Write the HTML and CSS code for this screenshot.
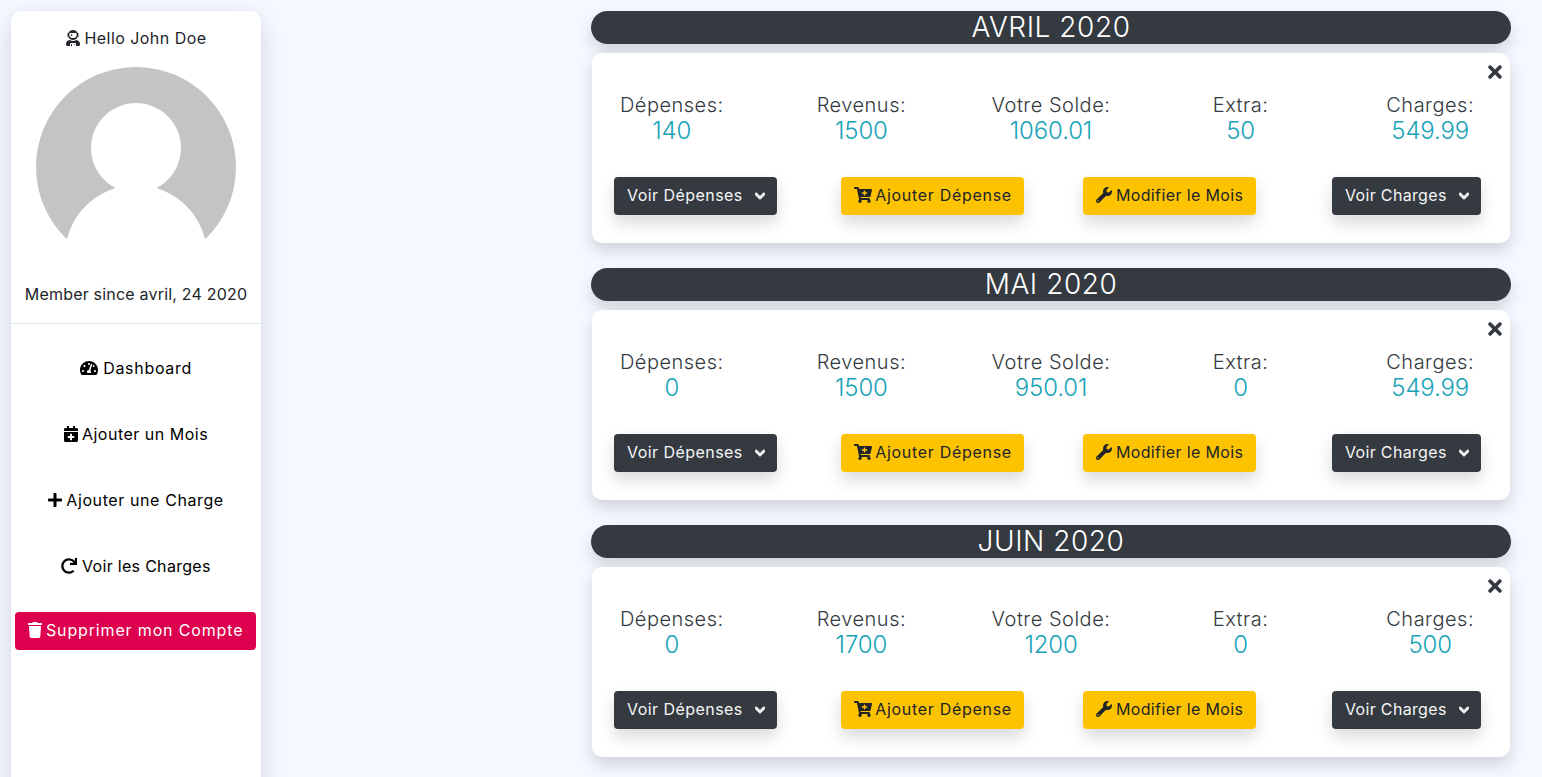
FILE: index.html
```html
<!DOCTYPE html>
<html lang="fr">
<head>
<meta charset="utf-8">
<title>Budget</title>
<link rel="stylesheet" href="styles.css">
</head>
<body>
<svg class="sprite" aria-hidden="true">
  <symbol id="i-astronaut" viewBox="0 0 448 512"><path d="M64 224h13.5c24.7 56.5 80.9 96 146.5 96s121.8-39.5 146.5-96H384c8.8 0 16-7.2 16-16v-96c0-8.8-7.2-16-16-16h-13.5C345.8 39.5 289.6 0 224 0S102.2 39.5 77.5 96H64c-8.8 0-16 7.2-16 16v96c0 8.8 7.2 16 16 16zm40-88c0-22 21.5-40 48-40h144c26.5 0 48 18 48 40v24c0 53-43 96-96 96h-48c-53 0-96-43-96-96v-24zm72 72l12-36 36-12-36-12-12-36-12 36-36 12 36 12 12 36zm151.6 113.4C297.7 340.7 262.2 352 224 352s-73.7-11.3-103.6-30.6C52.9 328.5 0 385 0 454.4v9.6c0 26.5 21.5 48 48 48h80v-64c0-17.7 14.3-32 32-32h128c17.7 0 32 14.3 32 32v64h80c26.5 0 48-21.5 48-48v-9.6c0-69.4-52.9-125.9-120.4-133zM272 448c-8.8 0-16 7.2-16 16s7.2 16 16 16 16-7.2 16-16-7.2-16-16-16zm-96 0c-8.8 0-16 7.2-16 16v48h32v-48c0-8.8-7.2-16-16-16z"/></symbol>
  <symbol id="i-gauge" viewBox="0 0 576 512"><path d="M288 32C128.94 32 0 160.94 0 320c0 52.8 14.25 102.26 39.06 144.8 5.61 9.62 16.3 15.2 27.44 15.2h443c11.14 0 21.83-5.58 27.44-15.2C561.75 422.26 576 372.8 576 320c0-159.06-128.94-288-288-288zm0 64c14.71 0 26.58 10.13 30.32 23.65-1.11 2.26-2.64 4.23-3.45 6.67l-9.22 27.67c-5.13 3.49-10.97 6.01-17.64 6.01-17.67 0-32-14.33-32-32S270.33 96 288 96zM96 384c-17.67 0-32-14.33-32-32s14.33-32 32-32 32 14.33 32 32-14.33 32-32 32zm48-160c-17.67 0-32-14.33-32-32s14.33-32 32-32 32 14.33 32 32-14.33 32-32 32zm246.77-72.41l-61.33 184C343.13 347.33 352 364.54 352 384c0 11.72-3.38 22.55-8.88 32H232.88c-5.5-9.45-8.88-20.28-8.88-32 0-33.94 26.5-61.43 59.9-63.59l61.34-184.01c4.17-12.56 17.73-19.45 30.36-15.17 12.57 4.19 19.35 17.79 15.17 30.36zm14.66 57.2l15.52-46.55c3.47-1.29 7.13-2.23 11.05-2.23 17.67 0 32 14.33 32 32s-14.33 32-32 32c-11.38-.01-20.89-6.28-26.57-15.22zM480 384c-17.67 0-32-14.33-32-32s14.33-32 32-32 32 14.33 32 32-14.33 32-32 32z"/></symbol>
  <symbol id="i-calendar" viewBox="0 0 448 512"><path d="M436 160H12c-6.6 0-12-5.4-12-12v-36c0-26.5 21.5-48 48-48h48V12c0-6.6 5.4-12 12-12h40c6.6 0 12 5.4 12 12v52h128V12c0-6.6 5.4-12 12-12h40c6.6 0 12 5.4 12 12v52h48c26.5 0 48 21.5 48 48v36c0 6.6-5.4 12-12 12zM12 192h424c6.6 0 12 5.4 12 12v260c0 26.5-21.5 48-48 48H48c-26.5 0-48-21.5-48-48V204c0-6.6 5.4-12 12-12zm316 140c0-6.6-5.4-12-12-12h-60v-60c0-6.6-5.4-12-12-12h-40c-6.6 0-12 5.4-12 12v60h-60c-6.6 0-12 5.4-12 12v40c0 6.6 5.4 12 12 12h60v60c0 6.6 5.4 12 12 12h40c6.6 0 12-5.4 12-12v-60h60c6.6 0 12-5.4 12-12v-40z"/></symbol>
  <symbol id="i-plus" viewBox="0 0 448 512"><path d="M416 208H272V64c0-17.67-14.33-32-32-32h-32c-17.67 0-32 14.33-32 32v144H32c-17.67 0-32 14.33-32 32v32c0 17.67 14.33 32 32 32h144v144c0 17.67 14.33 32 32 32h32c17.67 0 32-14.33 32-32V304h144c17.67 0 32-14.33 32-32v-32c0-17.67-14.33-32-32-32z"/></symbol>
  <symbol id="i-redo" viewBox="0 0 512 512"><path d="M500.33 0h-47.41a12 12 0 0 0-12 12.57l4 82.76A247.42 247.42 0 0 0 256 8C119.34 8 7.9 119.53 8 256.19 8.1 393.07 119.1 504 256 504a247.1 247.1 0 0 0 166.18-63.91 12 12 0 0 0 .48-17.43l-34-34a12 12 0 0 0-16.38-.55A176 176 0 1 1 402.1 157.8l-101.53-4.87a12 12 0 0 0-12.57 12v47.41a12 12 0 0 0 12 12h200.33a12 12 0 0 0 12-12V12a12 12 0 0 0-12-12z"/></symbol>
  <symbol id="i-trash" viewBox="0 0 448 512"><path d="M432 32H312l-9.4-18.7A24 24 0 0 0 281.1 0H166.8a23.72 23.72 0 0 0-21.4 13.3L136 32H16A16 16 0 0 0 0 48v32a16 16 0 0 0 16 16h416a16 16 0 0 0 16-16V48a16 16 0 0 0-16-16zM53.2 467a48 48 0 0 0 47.9 45h245.8a48 48 0 0 0 47.9-45L416 128H32z"/></symbol>
  <symbol id="i-times" viewBox="0 0 352 512"><path d="M242.72 256l100.07-100.07c12.28-12.28 12.28-32.19 0-44.48l-22.24-22.24c-12.28-12.28-32.19-12.28-44.48 0L176 189.28 75.93 89.21c-12.28-12.28-32.19-12.28-44.48 0L9.21 111.45c-12.28 12.28-12.28 32.19 0 44.48L109.28 256 9.21 356.07c-12.28 12.28-12.28 32.19 0 44.48l22.24 22.24c12.28 12.28 32.2 12.28 44.48 0L176 322.72l100.07 100.07c12.28 12.28 32.2 12.28 44.48 0l22.24-22.24c12.28-12.28 12.28-32.19 0-44.48L242.72 256z"/></symbol>
  <symbol id="i-chevron" viewBox="0 0 448 512"><path d="M207.029 381.476L12.686 187.132c-9.373-9.373-9.373-24.569 0-33.941l22.667-22.667c9.357-9.357 24.522-9.375 33.901-.04L224 284.505l154.745-154.021c9.379-9.335 24.544-9.317 33.901.04l22.667 22.667c9.373 9.373 9.373 24.569 0 33.941L240.971 381.476c-9.373 9.372-24.569 9.372-33.942 0z"/></symbol>
  <symbol id="i-cart" viewBox="0 0 576 512"><path d="M504.717 320H211.572l6.545 32h268.418c15.401 0 26.816 14.301 23.403 29.319l-5.517 24.276C523.112 414.668 536 433.828 536 456c0 31.202-25.519 56.444-56.824 55.994-29.823-.429-54.35-24.631-55.155-54.447-.44-16.287 6.085-31.049 16.803-41.548H231.176C241.553 426.165 248 440.326 248 456c0 31.813-26.528 57.431-58.67 55.938-28.54-1.325-51.751-24.385-53.251-52.917-1.158-22.034 10.436-41.455 28.051-51.586L93.883 64H24C10.745 64 0 53.255 0 40V24C0 10.745 10.745 0 24 0h102.529c11.401 0 21.228 8.021 23.513 19.19L159.208 64H551.99c15.401 0 26.816 14.301 23.403 29.319l-47.273 208C525.637 312.246 515.923 320 504.717 320zM408 168h-48v-40c0-8.837-7.163-16-16-16h-16c-8.837 0-16 7.163-16 16v40h-48c-8.837 0-16 7.163-16 16v16c0 8.837 7.163 16 16 16h48v40c0 8.837 7.163 16 16 16h16c8.837 0 16-7.163 16-16v-40h48c8.837 0 16-7.163 16-16v-16c0-8.837-7.163-16-16-16z"/></symbol>
  <symbol id="i-wrench" viewBox="0 0 512 512"><path d="M507.73 109.1c-2.24-9.03-13.54-12.09-20.12-5.51l-74.36 74.36-67.88-11.31-11.31-67.88 74.36-74.36c6.62-6.62 3.43-17.9-5.66-20.16-47.38-11.74-99.55.91-136.58 37.93-39.64 39.64-50.55 97.1-34.05 147.2L18.74 402.76c-24.99 24.99-24.99 65.51 0 90.5 24.99 24.99 65.51 24.99 90.5 0l213.21-213.21c50.12 16.71 107.47 5.68 147.37-34.22 37.07-37.07 49.7-89.32 37.91-136.73zM64 472c-13.25 0-24-10.75-24-24 0-13.26 10.75-24 24-24s24 10.74 24 24c0 13.25-10.75 24-24 24z"/></symbol>
</svg>

<div class="page">
  <aside class="sidebar">
    <p class="hello"><svg class="ic ic-astronaut"><use href="#i-astronaut"/></svg> Hello John Doe</p>
    <svg class="avatar" viewBox="0 0 200 200">
      <circle class="avatar-bg" cx="100" cy="100" r="100"/>
      <circle class="avatar-fg" cx="100" cy="81" r="45"/>
      <circle class="avatar-fg" cx="100" cy="189" r="71"/>
    </svg>
    <p class="since">Member since avril, 24 2020</p>
    <nav class="nav">
      <a class="nav-link nav-dash" href="#"><svg class="ic ic-gauge"><use href="#i-gauge"/></svg> Dashboard</a>
      <a class="nav-link" href="#"><svg class="ic ic-cal"><use href="#i-calendar"/></svg> Ajouter un Mois</a>
      <a class="nav-link nav-add" href="#"><svg class="ic ic-plus"><use href="#i-plus"/></svg> Ajouter une Charge</a>
      <a class="nav-link nav-see" href="#"><svg class="ic ic-redo"><use href="#i-redo"/></svg> Voir les Charges</a>
    </nav>
    <a class="btn btn-danger" href="#"><svg class="ic ic-trash"><use href="#i-trash"/></svg> Supprimer mon Compte</a>
  </aside>

  <main class="months">
    <section class="month">
      <h2 class="month-title">AVRIL 2020</h2>
      <div class="card">
        <svg class="close"><use href="#i-times"/></svg>
        <div class="stats">
          <div class="stat"><span class="stat-label">Dépenses:</span><span class="stat-value">140</span></div>
          <div class="stat"><span class="stat-label">Revenus:</span><span class="stat-value">1500</span></div>
          <div class="stat"><span class="stat-label">Votre Solde:</span><span class="stat-value">1060.01</span></div>
          <div class="stat"><span class="stat-label">Extra:</span><span class="stat-value">50</span></div>
          <div class="stat"><span class="stat-label">Charges:</span><span class="stat-value">549.99</span></div>
        </div>
        <div class="actions">
          <a class="btn btn-dark btn-w1" href="#">Voir Dépenses <svg class="ic ic-chev"><use href="#i-chevron"/></svg></a>
          <a class="btn btn-warning btn-w2" href="#"><svg class="ic ic-cart"><use href="#i-cart"/></svg> Ajouter Dépense</a>
          <a class="btn btn-warning btn-w3" href="#"><svg class="ic ic-wrench"><use href="#i-wrench"/></svg> Modifier le Mois</a>
          <a class="btn btn-dark btn-w4" href="#">Voir Charges <svg class="ic ic-chev"><use href="#i-chevron"/></svg></a>
        </div>
      </div>
    </section>

    <section class="month">
      <h2 class="month-title">MAI 2020</h2>
      <div class="card">
        <svg class="close"><use href="#i-times"/></svg>
        <div class="stats">
          <div class="stat"><span class="stat-label">Dépenses:</span><span class="stat-value">0</span></div>
          <div class="stat"><span class="stat-label">Revenus:</span><span class="stat-value">1500</span></div>
          <div class="stat"><span class="stat-label">Votre Solde:</span><span class="stat-value">950.01</span></div>
          <div class="stat"><span class="stat-label">Extra:</span><span class="stat-value">0</span></div>
          <div class="stat"><span class="stat-label">Charges:</span><span class="stat-value">549.99</span></div>
        </div>
        <div class="actions">
          <a class="btn btn-dark btn-w1" href="#">Voir Dépenses <svg class="ic ic-chev"><use href="#i-chevron"/></svg></a>
          <a class="btn btn-warning btn-w2" href="#"><svg class="ic ic-cart"><use href="#i-cart"/></svg> Ajouter Dépense</a>
          <a class="btn btn-warning btn-w3" href="#"><svg class="ic ic-wrench"><use href="#i-wrench"/></svg> Modifier le Mois</a>
          <a class="btn btn-dark btn-w4" href="#">Voir Charges <svg class="ic ic-chev"><use href="#i-chevron"/></svg></a>
        </div>
      </div>
    </section>

    <section class="month">
      <h2 class="month-title">JUIN 2020</h2>
      <div class="card">
        <svg class="close"><use href="#i-times"/></svg>
        <div class="stats">
          <div class="stat"><span class="stat-label">Dépenses:</span><span class="stat-value">0</span></div>
          <div class="stat"><span class="stat-label">Revenus:</span><span class="stat-value">1700</span></div>
          <div class="stat"><span class="stat-label">Votre Solde:</span><span class="stat-value">1200</span></div>
          <div class="stat"><span class="stat-label">Extra:</span><span class="stat-value">0</span></div>
          <div class="stat"><span class="stat-label">Charges:</span><span class="stat-value">500</span></div>
        </div>
        <div class="actions">
          <a class="btn btn-dark btn-w1" href="#">Voir Dépenses <svg class="ic ic-chev"><use href="#i-chevron"/></svg></a>
          <a class="btn btn-warning btn-w2" href="#"><svg class="ic ic-cart"><use href="#i-cart"/></svg> Ajouter Dépense</a>
          <a class="btn btn-warning btn-w3" href="#"><svg class="ic ic-wrench"><use href="#i-wrench"/></svg> Modifier le Mois</a>
          <a class="btn btn-dark btn-w4" href="#">Voir Charges <svg class="ic ic-chev"><use href="#i-chevron"/></svg></a>
        </div>
      </div>
    </section>
  </main>
</div>
</body>
</html>
```
FILE: styles.css
```css
* { box-sizing: border-box; }
html, body { height: 100%; }
body {
  margin: 0;
  overflow: hidden;
  background: #f4f8ff;
  color: #212529;
  font-family: Inter, "Liberation Sans", sans-serif;
  font-size: 16px;
  line-height: 24px;
  letter-spacing: 0.5px;
  font-weight: 400;
}
.sprite { display: none; }
.page {
  display: flex;
  align-items: flex-start;
  gap: 330px;
  padding: 11px 0 0 11px;
}
.sidebar {
  flex: 0 0 250px;
  height: 800px;
  display: flex;
  flex-direction: column;
  align-items: center;
  padding-top: 15px;
  background: #fff;
  border-radius: 10px;
  box-shadow: 0 .5rem 1.5rem rgba(0, 0, 0, .15);
}
.hello { margin: 0; height: 24px; letter-spacing: .45px; }
.ic { display: inline-block; height: 16px; width: 16px; vertical-align: -2px; fill: currentColor; }
.ic-astronaut { width: 14px; }
.ic-gauge { width: 18px; }
.ic-cal { width: 14px; margin-right: -1px; }
.ic-plus { width: 14px; margin-right: -1px; }
.ic-redo { width: 16px; }
.ic-trash { width: 14px; margin-right: -1px; }
.ic-cart { width: 18px; margin-right: -2px; }
.ic-wrench { width: 16px; margin-right: -1px; }
.ic-chev { width: 10px; height: 12px; margin-left: 7px; vertical-align: -1px; overflow: visible; stroke: currentColor; stroke-width: 45; }
.avatar { display: block; width: 200px; height: 200px; margin-top: 17px; flex: none; }
.avatar-bg { fill: #c4c4c4; }
.avatar-fg { fill: #fff; }
.since { margin: 15px 0 0; height: 42px; width: 100%; text-align: center; border-bottom: 1px solid #e3e6ea; letter-spacing: .2px; }
.nav { display: flex; flex-direction: column; width: 100%; padding-top: 12px; }
.nav-link {
  height: 66px;
  padding-top: 20px;
  text-align: center;
  color: #000;
  text-decoration: none;
}
.nav-dash { letter-spacing: .7px; }
.nav-add { letter-spacing: .6px; }
.nav-see { letter-spacing: .3px; }
.btn {
  display: inline-block;
  height: 38px;
  padding: 6px 13px;
  border-radius: 4px;
  text-decoration: none;
  text-align: center;
  white-space: nowrap;
}
.btn-danger {
  width: 241px;
  margin-top: 12px;
  margin-left: -1px;
  padding: 6px 0;
  letter-spacing: .85px;
  color: #fff;
  background: #dc004e;
}
.btn-dark, .btn-warning { box-shadow: 0 .5rem 1rem rgba(0, 0, 0, .15); }
.btn-dark { color: #f4f5f6; background: #343a40; text-align: left; }
.btn-warning { color: #212529; background: #fdc300; }
.btn-w1 { width: 163px; letter-spacing: .45px; }
.btn-w2 { width: 183px; letter-spacing: .7px; }
.btn-w3 { width: 173px; letter-spacing: .38px; }
.btn-w4 { width: 149px; letter-spacing: .33px; }

.months { flex: 0 0 920px; display: flex; flex-direction: column; gap: 25px; }
.month-title {
  margin: 0;
  height: 33px;
  text-align: center;
  color: #fff;
  background: #343a40;
  border-radius: 17px;
  font-size: 28px;
  line-height: 33px;
  font-weight: 300;
  letter-spacing: .55px;
  box-shadow: 0 .5rem 1rem rgba(0, 0, 0, .15);
}
.card {
  position: relative;
  height: 190px;
  margin: 9px 1px 0;
  padding-top: 39px;
  background: #fff;
  border-radius: 10px;
  box-shadow: 0 .5rem 1rem rgba(0, 0, 0, .15);
}
.close { position: absolute; top: 9px; right: 7px; width: 16px; height: 20px; fill: #343a40; }
.stats { display: grid; grid-template-columns: repeat(5, 1fr); margin: 0 -15px; font-weight: 300; }
.stat { display: flex; flex-direction: column; align-items: center; }
.stat-label { font-size: 20px; line-height: 26px; color: #343a40; letter-spacing: .5px; }
.stat-value { font-size: 24px; line-height: 26px; color: #17a2b8; letter-spacing: -.15px; }
.actions { display: grid; grid-template-columns: repeat(4, 1fr); justify-items: center; margin: 33px -15px 0; }
```
